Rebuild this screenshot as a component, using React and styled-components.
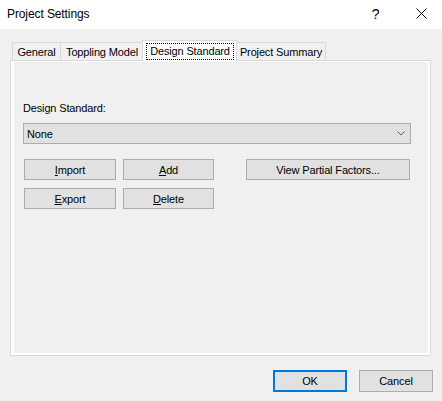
import React from 'react';
import styled, { createGlobalStyle } from 'styled-components';

const GlobalStyle = createGlobalStyle`
  html, body {
    margin: 0;
    padding: 0;
    background: #f0f0f0;
  }
  body {
    font-family: "Liberation Sans", Arial, sans-serif;
    font-size: 11px;
    letter-spacing: -0.15px;
    color: #000;
  }
`;

const Window = styled.div`
  width: 442px;
  height: 401px;
  display: flex;
  flex-direction: column;
  background: #f0f0f0;
  overflow: hidden;
`;

const TitleBar = styled.div`
  height: 29px;
  flex: none;
  display: flex;
  align-items: center;
  background: #fff;
  padding-left: 7px;
`;

const Title = styled.div`
  flex: 1;
  font-size: 12px;
  letter-spacing: -0.1px;
  line-height: 16px;
  padding-bottom: 2px;
`;

const CaptionButton = styled.div`
  width: ${({ $w }) => $w}px;
  height: 29px;
  display: flex;
  align-items: center;
  justify-content: center;
  font-size: 14px;
  padding-bottom: 2px;
  box-sizing: border-box;
`;

const Body = styled.div`
  flex: 1;
  display: flex;
  flex-direction: column;
  padding: 11px 11px 9px 10px;
  min-height: 0;
`;

const TabStrip = styled.div`
  height: 20px;
  flex: none;
  display: flex;
  align-items: flex-end;
  padding-left: 2px;
`;

const Tab = styled.div`
  position: relative;
  width: ${({ $w }) => $w}px;
  height: ${({ $active }) => ($active ? 21 : 18)}px;
  margin-left: ${({ $ml }) => $ml || 0}px;
  margin-bottom: ${({ $active }) => ($active ? -1 : 0)}px;
  z-index: ${({ $active }) => ($active ? 2 : 1)};
  box-sizing: border-box;
  border: 1px solid #d9d9d9;
  border-bottom: none;
  background: ${({ $active }) => ($active ? '#fff' : '#f0f0f0')};
  display: flex;
  align-items: ${({ $active }) => ($active ? 'flex-start' : 'center')};
  justify-content: center;
  line-height: 16px;
  padding-top: ${({ $active }) => ($active ? 0 : 1)}px;
  white-space: nowrap;
`;

const FocusRect = styled.span`
  flex: 1;
  margin: 2px 2px 0 3px;
  height: 17px;
  box-sizing: border-box;
  border: 1px dotted #000;
  display: flex;
  align-items: center;
  justify-content: center;
  line-height: 15px;
`;

const Panel = styled.div`
  flex: 1;
  display: flex;
  border: 1px solid #d9d9d9;
  background: #fff;
  padding: 1px 2px 2px 3px;
  min-height: 0;
`;

const Page = styled.div`
  flex: 1;
  background: #f0f0f0;
  padding: 38px 0 0 9px;
`;

const FieldLabel = styled.div`
  line-height: 16px;
`;

const Combo = styled.div`
  margin-top: 7px;
  width: 388px;
  height: 21px;
  box-sizing: border-box;
  border: 1px solid #adadad;
  background: #e1e1e1;
  display: flex;
  align-items: center;
  padding: 0 5px 0 3px;
`;

const ComboValue = styled.span`
  flex: 1;
`;

const ButtonGrid = styled.div`
  margin: 15px 0 0 1px;
  display: flex;
  flex-direction: column;
  gap: 8px;
`;

const ButtonRow = styled.div`
  display: flex;
  gap: 7px;
`;

const Button = styled.button`
  width: ${({ $w }) => $w}px;
  height: ${({ $h }) => $h || 21}px;
  margin-left: ${({ $ml }) => $ml || 0}px;
  box-sizing: border-box;
  border: ${({ $default }) => ($default ? '2px solid #0078d7' : '1px solid #adadad')};
  background: #e1e1e1;
  font-family: inherit;
  font-size: 11px;
  letter-spacing: inherit;
  color: #000;
  padding: 0;
  line-height: 16px;
  border-radius: 0;
`;

const Footer = styled.div`
  flex: none;
  display: flex;
  justify-content: flex-end;
  gap: 12px;
  padding: 14px 0 0;
  margin-right: -2px;
`;

const Chevron = () => (
  <svg width="8" height="5" viewBox="0 0 8 5">
    <polyline points="0.5,0.5 4,4 7.5,0.5" fill="none" stroke="#606060" strokeWidth="1" />
  </svg>
);

const CloseGlyph = () => (
  <svg width="11" height="11" viewBox="0 0 11 11">
    <path d="M0.5 0.5 L10.5 10.5 M10.5 0.5 L0.5 10.5" stroke="#000" strokeWidth="1" />
  </svg>
);

const tabs = [
  { label: 'General', w: 49 },
  { label: 'Toppling Model', w: 84, ml: -1 },
  { label: 'Design Standard', w: 95, ml: -2, active: true },
  { label: 'Project Summary', w: 90, ml: -1 },
];

export default function App() {
  return (
    <>
      <GlobalStyle />
      <Window>
        <TitleBar>
          <Title>Project Settings</Title>
          <CaptionButton $w={49}>?</CaptionButton>
          <CaptionButton $w={42}>
            <CloseGlyph />
          </CaptionButton>
        </TitleBar>
        <Body>
          <TabStrip>
            {tabs.map((t) => (
              <Tab key={t.label} $w={t.w} $ml={t.ml} $active={t.active}>
                {t.active ? <FocusRect>{t.label}</FocusRect> : t.label}
              </Tab>
            ))}
          </TabStrip>
          <Panel>
            <Page>
              <FieldLabel>Design Standard:</FieldLabel>
              <Combo>
                <ComboValue>None</ComboValue>
                <Chevron />
              </Combo>
              <ButtonGrid>
                <ButtonRow>
                  <Button $w={92}><u>I</u>mport</Button>
                  <Button $w={91}><u>A</u>dd</Button>
                  <Button $w={164} $ml={25}>View Partial Factors...</Button>
                </ButtonRow>
                <ButtonRow>
                  <Button $w={92}><u>E</u>xport</Button>
                  <Button $w={91}><u>D</u>elete</Button>
                </ButtonRow>
              </ButtonGrid>
            </Page>
          </Panel>
          <Footer>
            <Button $w={74} $h={22} $default>OK</Button>
            <Button $w={74} $h={22}>Cancel</Button>
          </Footer>
        </Body>
      </Window>
    </>
  );
}
